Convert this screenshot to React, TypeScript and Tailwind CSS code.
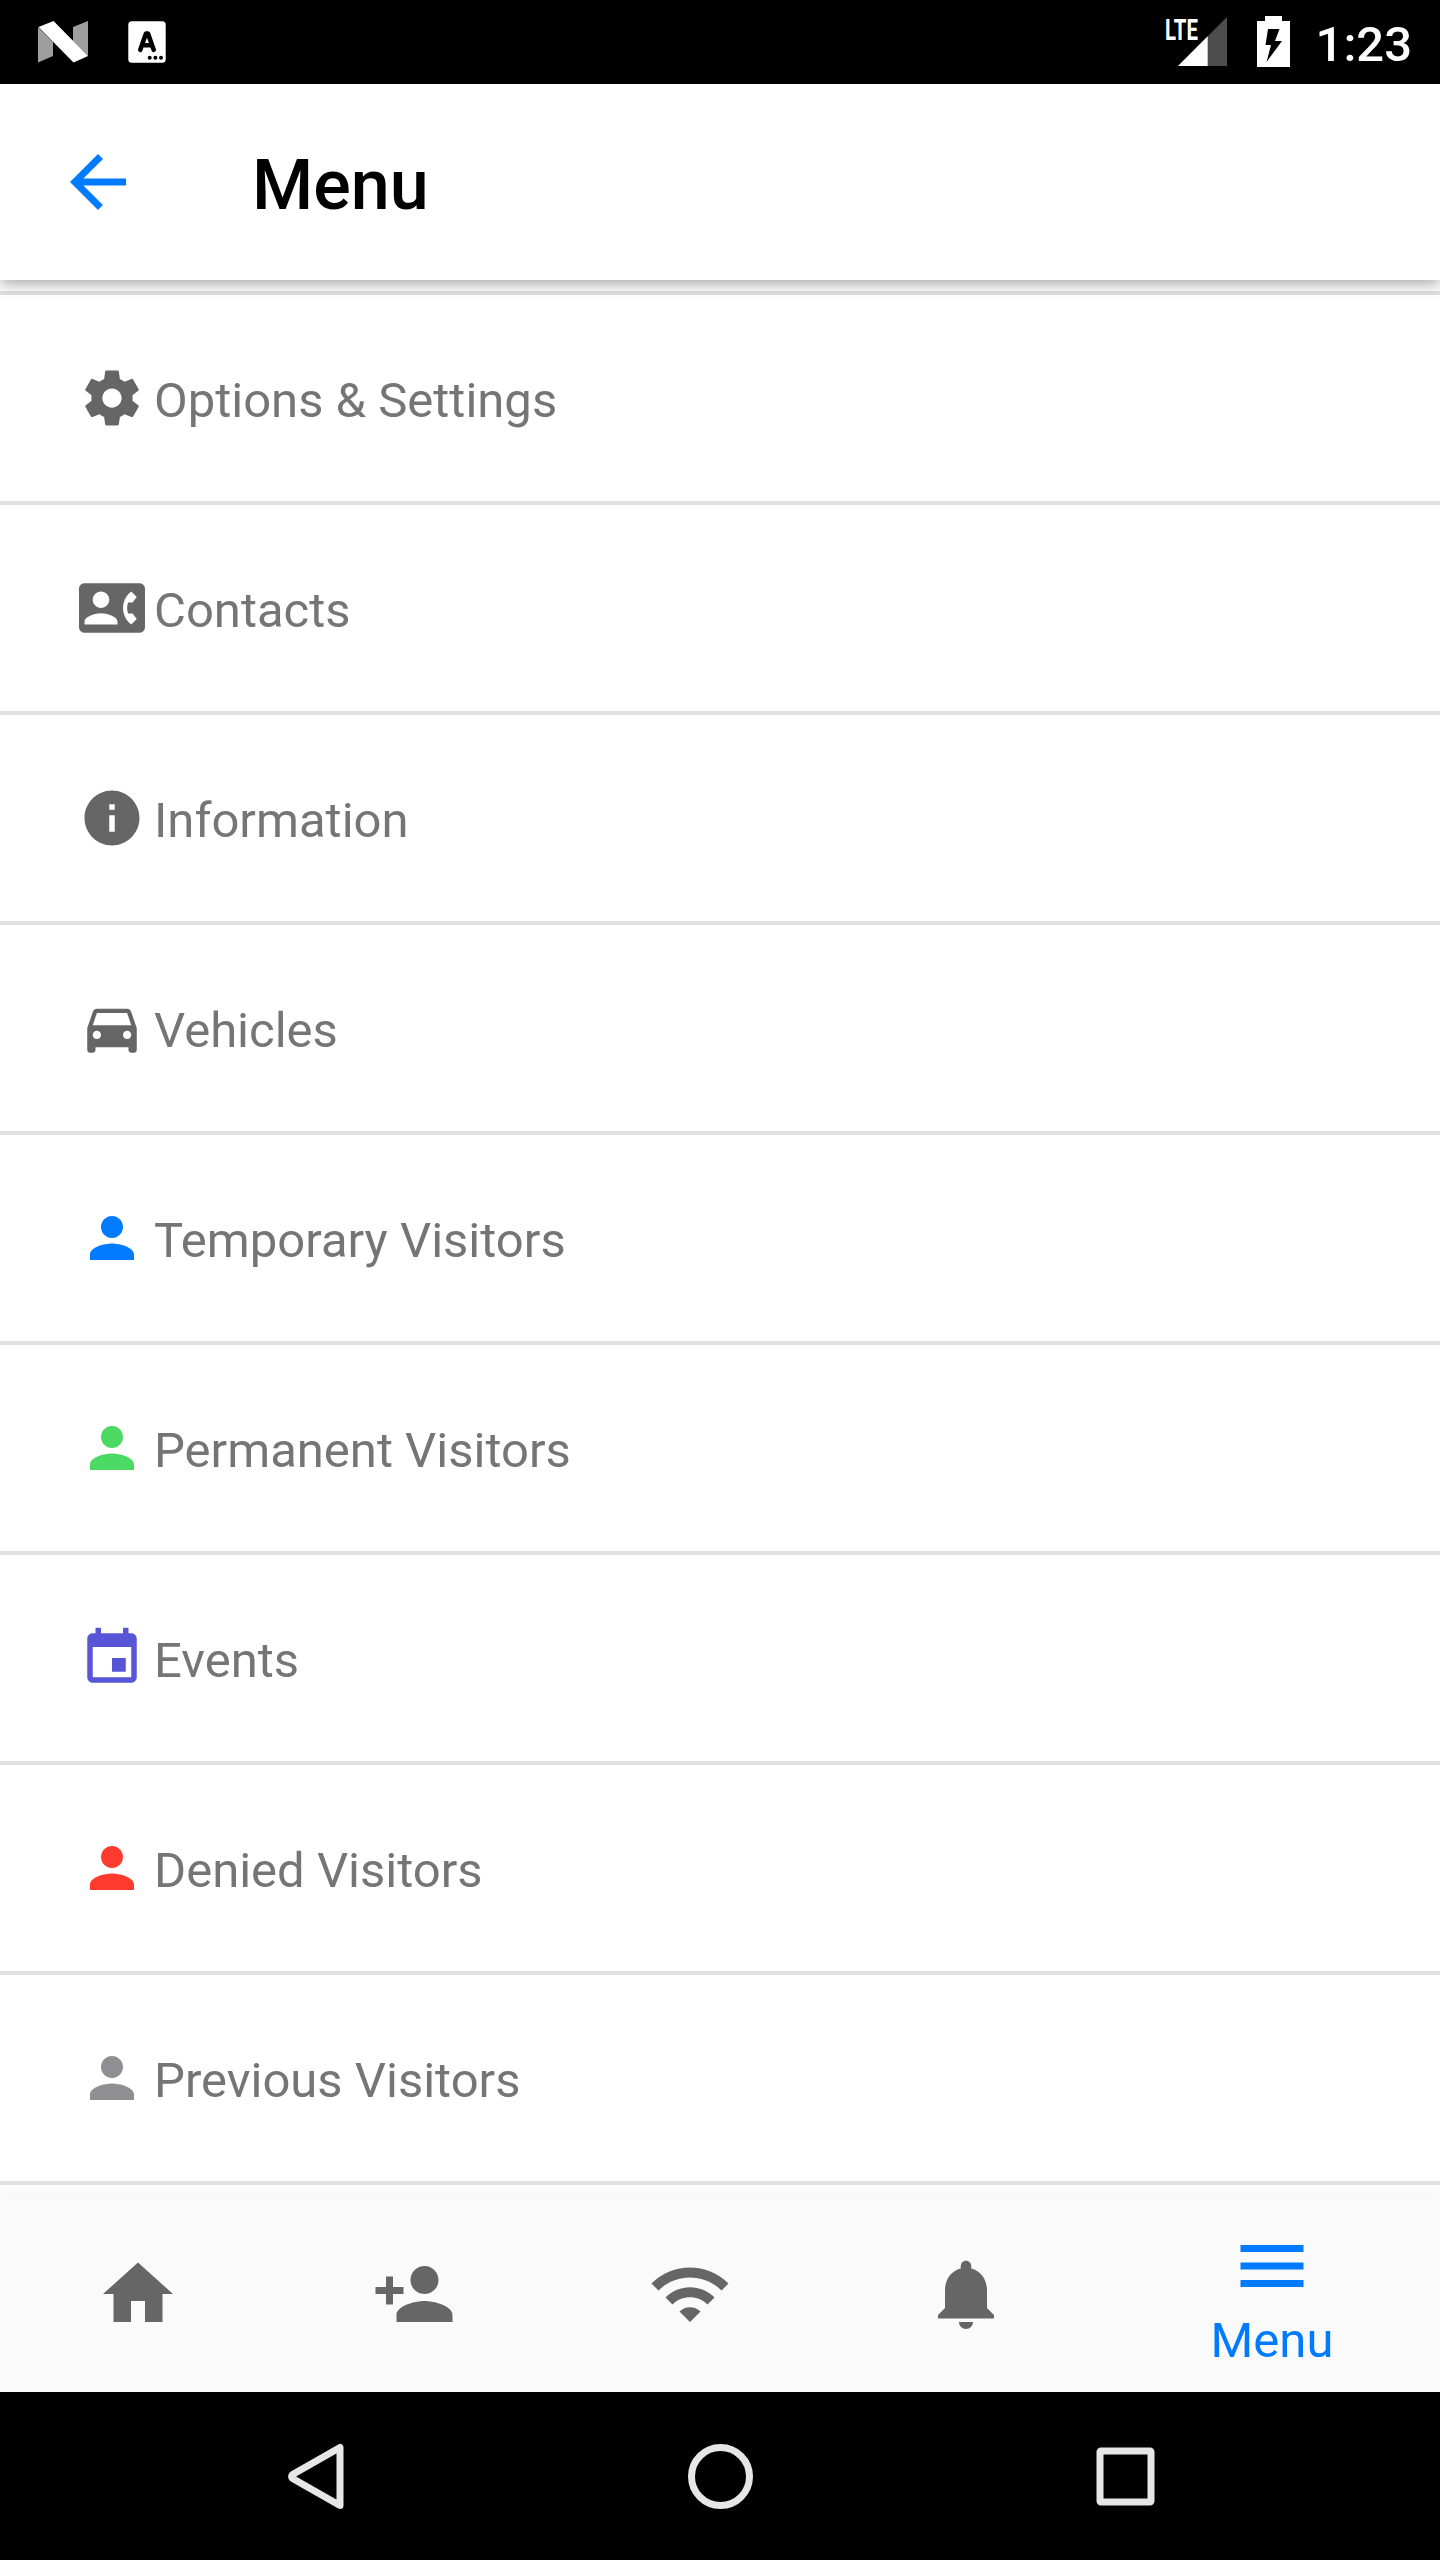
interface IconProps {
  path: string;
  className?: string;
}

interface MenuItem {
  label: string;
  path: string;
  color: string;
}

const paths = {
  back: 'M20 11H7.83l5.59-5.59L12 4l-8 8 8 8 1.41-1.41L7.83 13H20v-2z',
  settings:
    'M19.43 12.98c.04-.32.07-.64.07-.98s-.03-.66-.07-.98l2.11-1.65c.19-.15.24-.42.12-.64l-2-3.46c-.12-.22-.39-.3-.61-.22l-2.49 1c-.52-.4-1.08-.73-1.69-.98l-.38-2.65C14.46 2.18 14.25 2 14 2h-4c-.25 0-.46.18-.49.42l-.38 2.65c-.61.25-1.17.59-1.69.98l-2.49-1c-.23-.09-.49 0-.61.22l-2 3.46c-.13.22-.07.49.12.64l2.11 1.65c-.04.32-.07.65-.07.98s.03.66.07.98l-2.11 1.65c-.19.15-.24.42-.12.64l2 3.46c.12.22.39.3.61.22l2.49-1c.52.4 1.08.73 1.69.98l.38 2.65c.03.24.24.42.49.42h4c.25 0 .46-.18.49-.42l.38-2.65c.61-.25 1.17-.59 1.69-.98l2.49 1c.23.09.49 0 .61-.22l2-3.46c.12-.22.07-.49-.12-.64l-2.11-1.65zM12 15.5c-1.93 0-3.5-1.57-3.5-3.5s1.57-3.5 3.5-3.5 3.5 1.57 3.5 3.5-1.57 3.5-3.5 3.5z',
  contacts:
    'M22 3H2C.9 3 0 3.9 0 5v14c0 1.1.9 2 2 2h20c1.1 0 1.99-.9 1.99-2L24 5c0-1.1-.9-2-2-2zM8 6c1.66 0 3 1.34 3 3s-1.34 3-3 3-3-1.34-3-3 1.34-3 3-3zm6 12H2v-1c0-2 4-3.1 6-3.1s6 1.1 6 3.1v1zm3.85-4h1.64L21 16l-1.99 1.99c-1.31-.98-2.28-2.38-2.73-3.99-.18-.64-.28-1.31-.28-2s.1-1.36.28-2c.45-1.62 1.42-3.01 2.73-3.99L21 8l-1.51 2h-1.64c-.22.63-.35 1.3-.35 2s.13 1.37.35 2z',
  info: 'M12 2C6.48 2 2 6.48 2 12s4.48 10 10 10 10-4.48 10-10S17.52 2 12 2zm1 15h-2v-6h2v6zm0-8h-2V7h2v2z',
  car: 'M18.92 6.01C18.72 5.42 18.16 5 17.5 5h-11c-.66 0-1.21.42-1.42 1.01L3 12v8c0 .55.45 1 1 1h1c.55 0 1-.45 1-1v-1h12v1c0 .55.45 1 1 1h1c.55 0 1-.45 1-1v-8l-2.08-5.99zM6.5 16c-.83 0-1.5-.67-1.5-1.5S5.67 13 6.5 13s1.5.67 1.5 1.5S7.33 16 6.5 16zm11 0c-.83 0-1.5-.67-1.5-1.5s.67-1.5 1.5-1.5 1.5.67 1.5 1.5-.67 1.5-1.5 1.5zM5 11l1.5-4.5h11L19 11H5z',
  person:
    'M12 12c2.21 0 4-1.79 4-4s-1.79-4-4-4-4 1.79-4 4 1.79 4 4 4zm0 2c-2.67 0-8 1.34-8 4v2h16v-2c0-2.66-5.33-4-8-4z',
  event:
    'M17 12h-5v5h5v-5zM16 1v2H8V1H6v2H5c-1.11 0-1.99.9-1.99 2L3 19c0 1.1.89 2 2 2h14c1.1 0 2-.9 2-2V5c0-1.1-.9-2-2-2h-1V1h-2zm3 18H5V8h14v11z',
  home: 'M10 20v-6h4v6h5v-8h3L12 3 2 12h3v8z',
  personAdd:
    'M15 12c2.21 0 4-1.79 4-4s-1.79-4-4-4-4 1.79-4 4 1.79 4 4 4zm-9-2V7H4v3H1v2h3v3h2v-3h3v-2H6zm9 4c-2.67 0-8 1.34-8 4v2h16v-2c0-2.66-5.33-4-8-4z',
  wifi: 'M1 9l2 2c4.97-4.97 13.03-4.97 18 0l2-2C16.93 2.93 7.08 2.93 1 9zm8 8l3 3 3-3c-1.65-1.66-4.34-1.66-6 0zm-4-4l2 2c2.76-2.76 7.24-2.76 10 0l2-2C15.14 9.14 8.87 9.14 5 13z',
  bell: 'M12 22c1.1 0 2-.9 2-2h-4c0 1.1.89 2 2 2zm6-6v-5c0-3.07-1.64-5.64-4.5-6.32V4c0-.83-.67-1.5-1.5-1.5s-1.5.67-1.5 1.5v.68C7.63 5.36 6 7.92 6 11v5l-2 2v1h16v-1l-2-2z',
  menu: 'M3 18h18v-2H3v2zm0-5h18v-2H3v2zm0-7v2h18V6H3z',
};

const items: MenuItem[] = [
  { label: 'Options & Settings', path: paths.settings, color: 'text-[#666666]' },
  { label: 'Contacts', path: paths.contacts, color: 'text-[#666666]' },
  { label: 'Information', path: paths.info, color: 'text-[#666666]' },
  { label: 'Vehicles', path: paths.car, color: 'text-[#666666]' },
  { label: 'Temporary Visitors', path: paths.person, color: 'text-[#007aff]' },
  { label: 'Permanent Visitors', path: paths.person, color: 'text-[#4cd964]' },
  { label: 'Events', path: paths.event, color: 'text-[#5856d6]' },
  { label: 'Denied Visitors', path: paths.person, color: 'text-[#ff3b30]' },
  { label: 'Previous Visitors', path: paths.person, color: 'text-[#8e8e93]' },
];

const tabs = [
  { name: 'Home', path: paths.home },
  { name: 'Add visitor', path: paths.personAdd },
  { name: 'Network', path: paths.wifi },
  { name: 'Notifications', path: paths.bell },
];

function Icon({ path, className }: IconProps) {
  return (
    <svg viewBox="0 0 24 24" fill="currentColor" className={className} aria-hidden="true">
      <path d={path} />
    </svg>
  );
}

function StatusBar() {
  return (
    <div className="flex h-[84px] shrink-0 items-center justify-between bg-black pr-7 pl-[38px] text-white">
      <div className="flex items-center gap-10">
        <svg viewBox="0 0 50 42" className="h-[42px] w-[50px]">
          <path d="M0 6L15 21V35L0 41.5zM35 6L50 0V35L35 20z" fill="#9e9e9e" />
          <path d="M0.5 6L15.5 0L50 35L35.5 41.5z" fill="#fff" />
        </svg>
        {/* keyboard notification */}
        <svg viewBox="0 0 38 42" className="h-[42px] w-[38px]">
          <rect x="0.3" y="0.3" width="37.4" height="41.4" rx="3.5" fill="#fff" />
          <path
            d="M12.3 28.8L18 12.5H20L25.7 28.8M14 24.2H24"
            fill="none"
            stroke="#000"
            strokeWidth="4.6"
            strokeLinecap="round"
            strokeLinejoin="round"
          />
          <circle cx="21.7" cy="36.8" r="2" />
          <circle cx="27.4" cy="36.8" r="2" />
          <circle cx="33" cy="36.8" r="2" />
        </svg>
      </div>
      <div className="flex items-center">
        <div className="relative mr-[30px] h-[50px] w-[61px]">
          <svg viewBox="0 0 61 50" className="h-[50px] w-[61px]">
            <path d="M61 0V49H12z" fill="#4d4d4d" />
            <path d="M41.7 19.3V49H12z" fill="#fff" />
          </svg>
          <span className="absolute top-px left-[-1px] origin-left scale-x-[0.68] text-[30px] leading-[23px] font-bold">LTE</span>
        </div>
        <svg viewBox="0 0 33 52" className="mr-[26px] h-[52px] w-[33px]">
          <path
            fillRule="evenodd"
            fill="#fff"
            d="M8 0H25V5H33V51H0V5H8zM11 13L8.500 29H14L9.500 46L25 25H18L22.500 13z"
          />
        </svg>
        <span className="mt-1.5 text-[49px] leading-[58px] font-medium">1:23</span>
      </div>
    </div>
  );
}

function Header() {
  return (
    <header className="relative z-10 flex h-[196px] shrink-0 items-center bg-white pl-14 shadow-[0_4px_14px_rgba(0,0,0,0.35)]">
      <Icon path={paths.back} className="size-[84px] text-[#007aff]" />
      <h1 className="mt-1.5 ml-28 text-[70px] leading-[82px] font-medium text-black">Menu</h1>
    </header>
  );
}

function TabBar() {
  return (
    <nav className="relative z-10 flex h-[196px] shrink-0 bg-[#fafafa] shadow-[0_0_14px_rgba(0,0,0,0.07)]">
      {tabs.map((tab) => (
        <button key={tab.name} aria-label={tab.name} className="flex w-[276px] items-center justify-center text-[#666666]">
          <Icon path={tab.path} className="size-[84px]" />
        </button>
      ))}
      <button className="flex w-[336px] flex-col items-center pt-7 text-[#007aff]">
        <Icon path={paths.menu} className="size-[84px]" />
        <span className="mt-1 text-[49px] leading-[58px]">Menu</span>
      </button>
    </nav>
  );
}

function NavigationBar() {
  return (
    <div className="flex h-[168px] shrink-0 items-center justify-between bg-black px-[280px] text-[#e6e6e6]">
      <svg viewBox="0 0 72 72" className="size-[72px]" fill="none" stroke="currentColor" strokeWidth="7">
        <path d="M60 7.500V65.500L12.600 38.500Q10.500 36.500 12.600 34.500z" strokeLinejoin="round" />
      </svg>
      <svg viewBox="0 0 72 72" className="size-[72px]" fill="none" stroke="currentColor" strokeWidth="7">
        <circle cx="36.500" cy="36.500" r="29" />
      </svg>
      <svg viewBox="0 0 72 72" className="size-[72px]" fill="none" stroke="currentColor" strokeWidth="7">
        <rect x="12" y="11" width="51" height="51" rx="1" />
      </svg>
    </div>
  );
}

export default function App() {
  return (
    <div className="flex h-[2560px] w-[1440px] flex-col overflow-hidden bg-white font-[Roboto,sans-serif]">
      <StatusBar />
      <Header />
      <ul className="mt-[11px] h-[1905px] shrink-0 border-t-4 border-[#e0e0e0]">
        {items.map((item) => (
          <li key={item.label} className="flex h-[210px] items-center border-b-4 border-[#e0e0e0] pl-[79px]">
            <Icon path={item.path} className={`size-[66px] ${item.color}`} />
            <span className="mt-1.5 ml-[9px] text-[49px] leading-[58px] text-[#757575]">{item.label}</span>
          </li>
        ))}
      </ul>
      <TabBar />
      <NavigationBar />
    </div>
  );
}
